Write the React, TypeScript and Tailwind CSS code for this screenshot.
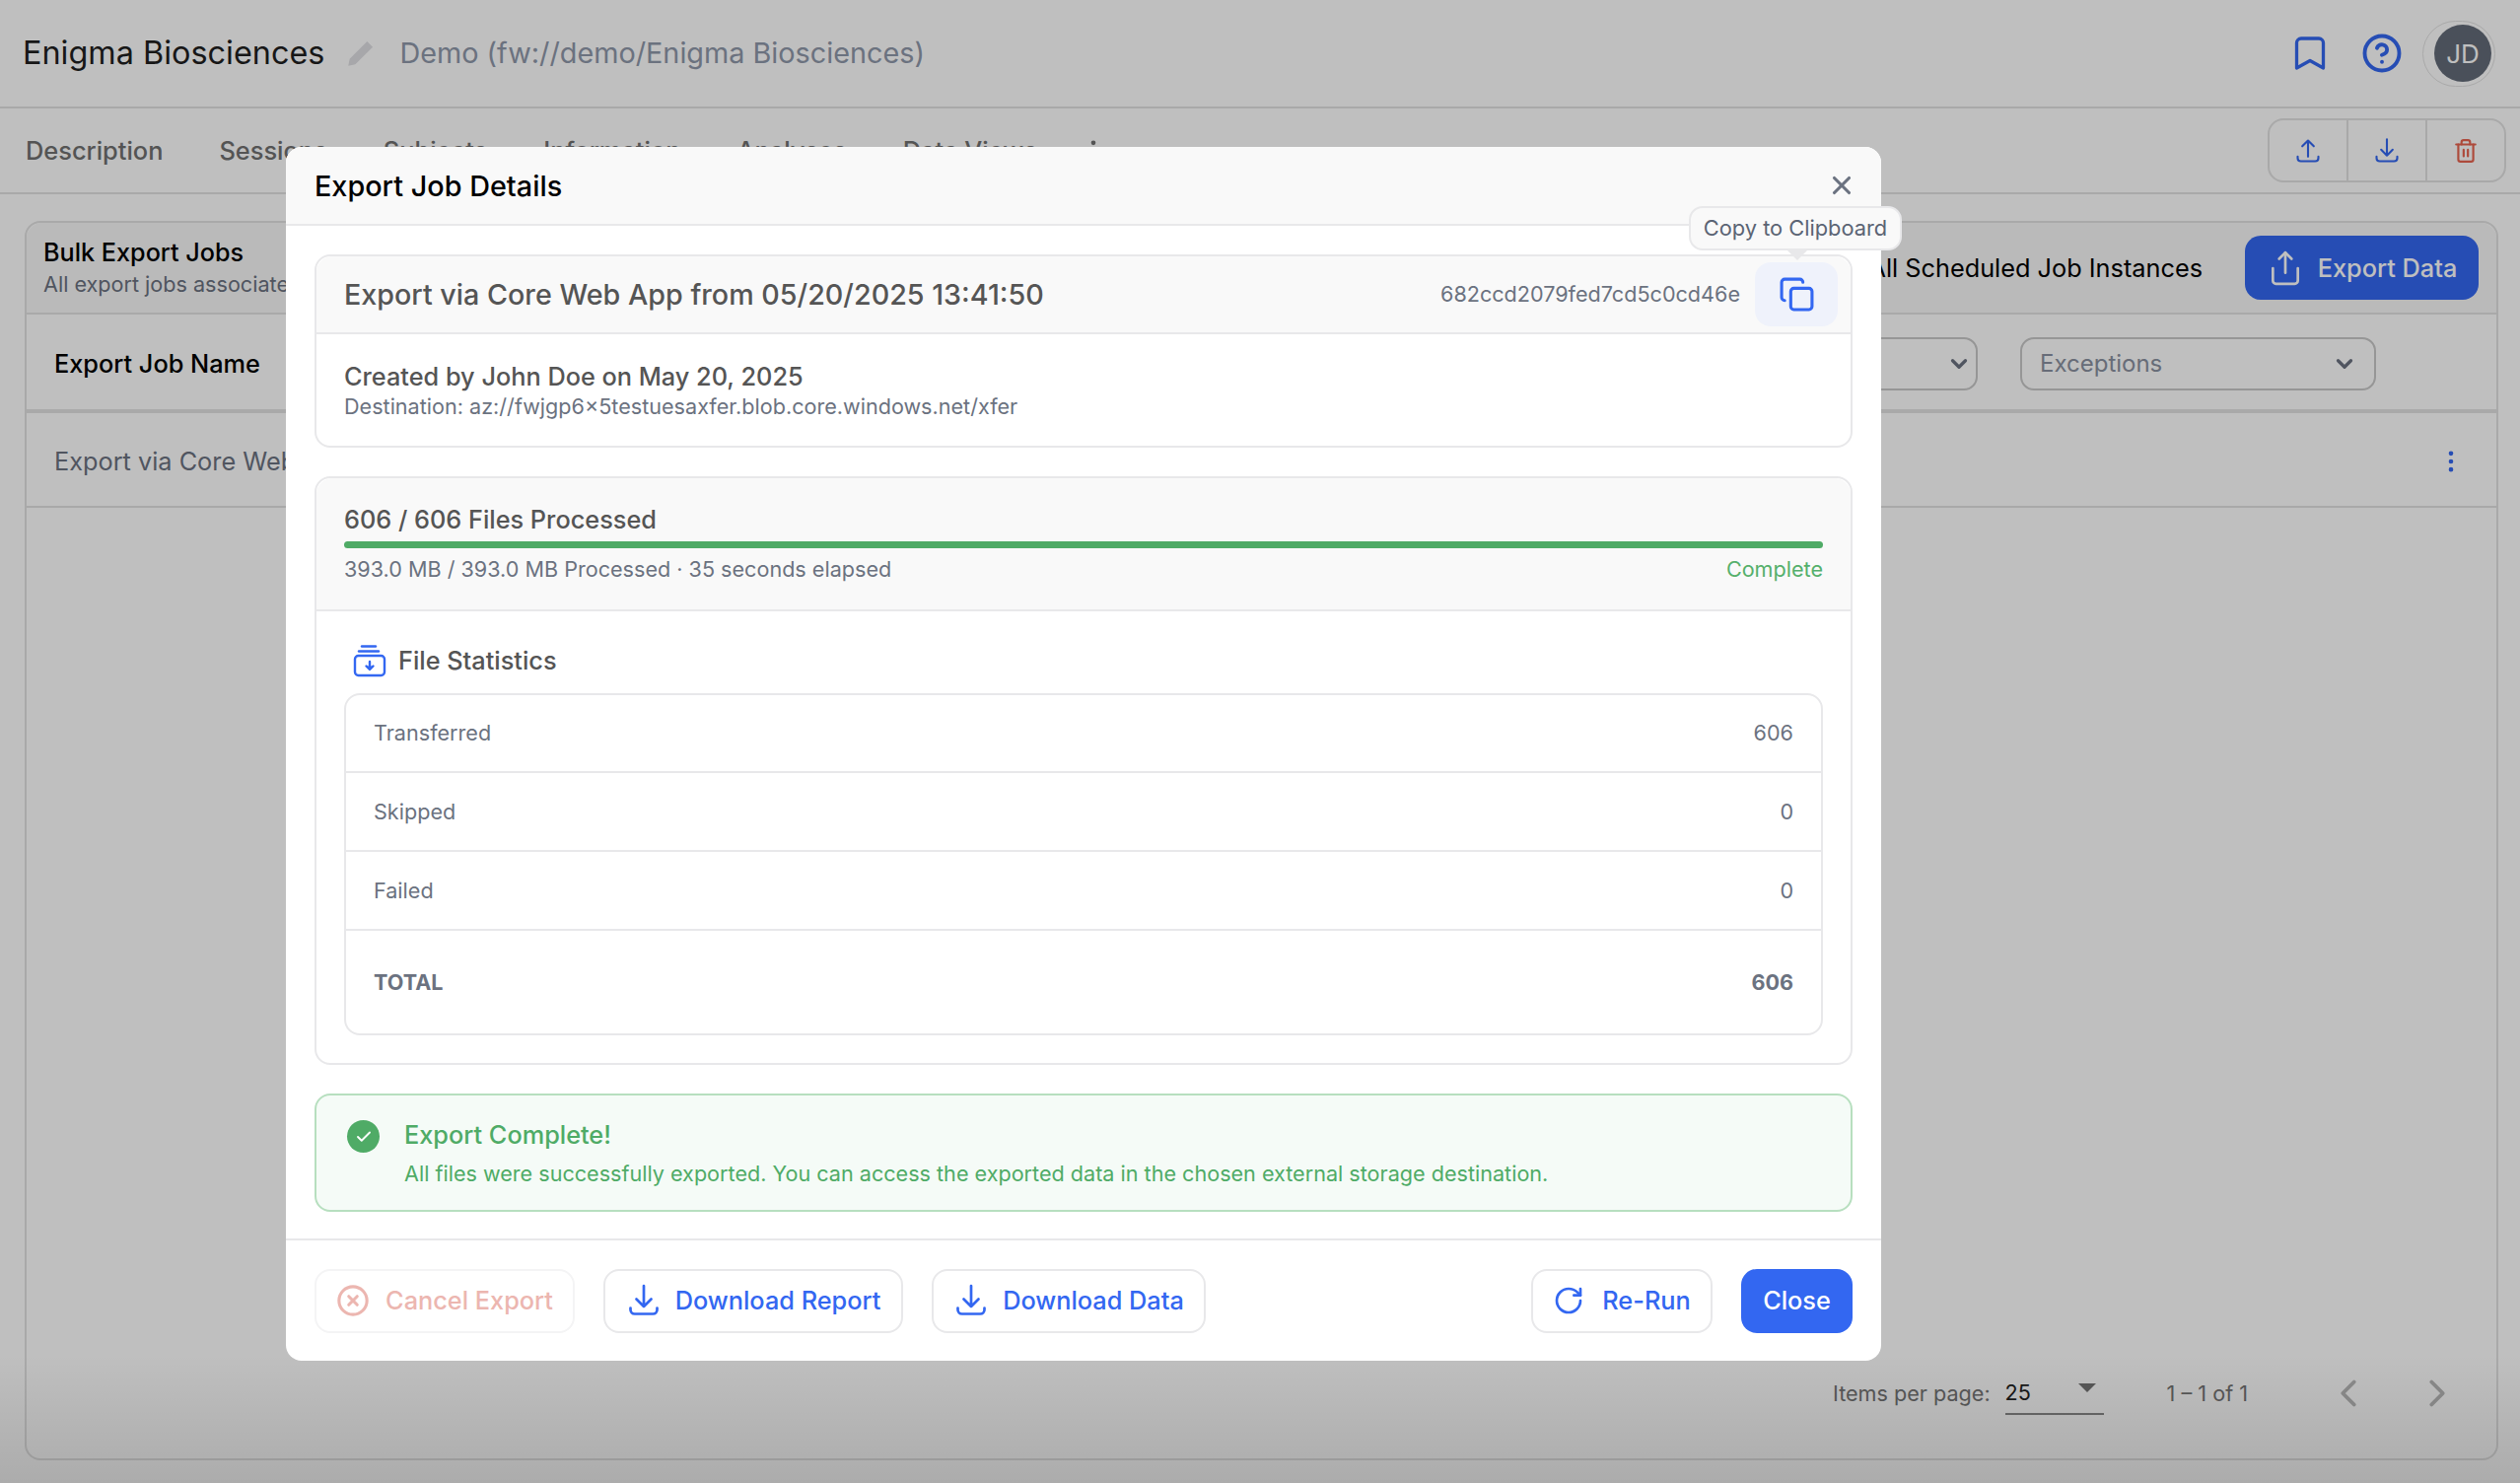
import React from 'react';
import {
  Check,
  ChevronDown,
  ChevronLeft,
  ChevronRight,
  CircleHelp,
  CircleX,
  Copy,
  EllipsisVertical,
  RotateCw,
  Share,
  Trash2,
  X,
} from 'lucide-react';

const TrayArrow: React.FC<{ className?: string; up?: boolean }> = ({ className, up }) => (
  <svg viewBox="0 0 24 24" fill="none" stroke="currentColor" strokeWidth="1.8" strokeLinecap="round" strokeLinejoin="round" className={className}>
    <path d="M3 17v1.2C3 19.8 4.2 21 5.8 21h12.4c1.6 0 2.8-1.2 2.8-2.8V17" />
    {up ? <path d="M12 17V3M7 8l5-5 5 5" /> : <path d="M12 2v14M7 11l5 5 5-5" />}
  </svg>
);

const StatsIcon: React.FC = () => (
  <svg viewBox="0 0 34 34" fill="none" className="h-[34px] w-[34px] text-[#3367f1]" stroke="currentColor" strokeLinecap="round" strokeLinejoin="round" strokeWidth="2.4">
    <path d="M9 2.5h14" />
    <path d="M6 7.5h20" />
    <rect x="2" y="12" width="30" height="20" rx="3.5" />
    <path d="M17 18v7" />
    <path d="M13.5 22.5l3.5 3.5 3.5-3.5" fill="currentColor" />
  </svg>
);

const tabs = ['Description', 'Sessions', 'Subjects', 'Information', 'Analyses', 'Data Views'];

const stats = [
  { label: 'Transferred', value: '606', height: 'h-[79px]' },
  { label: 'Skipped', value: '0', height: 'h-[80px]' },
  { label: 'Failed', value: '0', height: 'h-[80px]' },
];

const App: React.FC = () => {
  return (
    <div className="relative h-[1504px] w-[2556px] overflow-hidden bg-white font-[Inter,sans-serif]">
      {/* page behind the dialog */}
      <div className="flex h-[110px] items-center border-b-2 border-[#e2e2e2] pl-[23px] pr-[25px]">
        <span className="text-[32.4px] text-[#1f1f1f]">Enigma Biosciences</span>
        <svg viewBox="0 0 24 24" className="ml-[20px] h-[34px] w-[34px] text-[#dfdfe3]" fill="currentColor">
          <path d="M16.5 3.5l4 4L8 20l-5 1 1-5z" />
        </svg>
        <span className="ml-[22px] text-[28.8px] text-[#8f98aa]">Demo (fw://demo/Enigma Biosciences)</span>
        <div className="ml-auto flex items-center">
          <svg viewBox="0 0 24 24" fill="none" stroke="currentColor" strokeWidth="2.2" strokeLinecap="round" strokeLinejoin="round" className="h-[36px] w-[36px] text-[#3367f1]">
            <path d="M3 5a3 3 0 0 1 3-3h12a3 3 0 0 1 3 3v17l-9-5-9 5z" />
          </svg>
          <CircleHelp className="ml-[34px] h-[42px] w-[42px] text-[#3367f1]" strokeWidth={2.2} />
          <div className="ml-[20px] flex h-[67px] w-[74px] items-center justify-end rounded-full border border-[#e2e2e2] pr-[3px]">
            <div className="flex h-[58px] w-[58px] items-center justify-center rounded-full bg-[#636b78] text-[26px] text-white">JD</div>
          </div>
        </div>
      </div>

      <div className="flex h-[87px] items-center border-b-2 border-[#e2e2e2] pl-[26px] pr-[14px]">
        <div className="flex items-center gap-[57px] pt-[2px] text-[25.4px] font-medium text-[#717171]">
          {tabs.map((tab) => (
            <span key={tab}>{tab}</span>
          ))}
          <EllipsisVertical className="-ml-[14px] h-[28px] w-[28px]" />
        </div>
        <div className="ml-auto flex h-[65px] w-[242px] rounded-[16px] border-2 border-[#e2e2e2]">
          <div className="flex flex-1 items-center justify-center text-[#3367f1]">
            <TrayArrow up className="h-[28px] w-[28px]" />
          </div>
          <div className="flex flex-1 items-center justify-center border-x-2 border-[#e2e2e2] text-[#3367f1]">
            <TrayArrow className="h-[28px] w-[28px]" />
          </div>
          <div className="flex flex-1 items-center justify-center text-[#e7634f]">
            <Trash2 className="h-[26px] w-[26px]" />
          </div>
        </div>
      </div>

      <div className="ml-[25px] mt-[27px] flex h-[1257px] w-[2509px] flex-col rounded-[16px] border-2 border-[#e2e2e2]">
        <div className="flex h-[93px] items-center rounded-t-[16px] border-b-2 border-[#e2e2e2] bg-[#f9f9f9] pl-[17px] pr-[18px]">
          <div>
            <div className="text-[25.2px] font-medium leading-[32px] text-black">Bulk Export Jobs</div>
            <div className="pt-[1px] text-[21.6px] leading-[30px] text-[#6b7280]">All export jobs associated with this project</div>
          </div>
          <span className="ml-auto text-[25.3px] text-black">All Scheduled Job Instances</span>
          <button className="ml-[43px] flex h-[65px] w-[237px] items-center justify-center gap-[14px] rounded-[16px] bg-[#3367f1] text-[25.3px] font-medium text-white">
            <Share className="h-[38px] w-[38px]" strokeWidth={1.7} />
            Export Data
          </button>
        </div>
        <div className="flex h-[100px] items-center border-b-4 border-[#e2e2e2] bg-white pl-[28px] pr-[122px] pt-[4px]">
          <span className="text-[25.3px] font-medium text-black">Export Job Name</span>
          <div className="ml-auto flex h-[54px] w-[400px] items-center justify-end rounded-[14px] border-2 border-[#c8c8c8] pr-[4px]">
            <ChevronDown className="h-[26px] w-[26px] text-[#6b7280]" strokeWidth={3} />
          </div>
          <div className="ml-[43px] flex h-[54px] w-[361px] items-center justify-between rounded-[14px] border-2 border-[#c8c8c8] pl-[18px] pr-[17px]">
            <span className="text-[24px] text-[#8a91a0]">Exceptions</span>
            <ChevronDown className="h-[26px] w-[26px] text-[#6b7280]" strokeWidth={3} />
          </div>
        </div>
        <div className="flex h-[96px] items-center border-b-2 border-[#e2e2e2] pl-[28px] pr-[32px] pt-[3px]">
          <span className="text-[25.3px] text-[#6b7280]">Export via Core Web App from 05/20/2025 13:41:50</span>
          <EllipsisVertical className="ml-auto h-[28px] w-[28px] text-[#3367f1]" />
        </div>
        <div className="mt-auto mb-[43px] flex items-center justify-end pr-[37px] text-[21.6px] text-[#757575]">
          <span>Items per page:</span>
          <div className="relative ml-[15px] flex h-[44px] w-[100px] items-center border-b-2 border-[#8a8a8a] text-[#222222]">
            25
            <span className="absolute right-[8px] top-[12px] h-0 w-0 border-x-[9px] border-t-[9px] border-x-transparent border-t-[#757575]" />
          </div>
          <span className="ml-[64px]">1 – 1 of 1</span>
          <ChevronLeft className="ml-[79px] h-[46px] w-[46px] text-[#b8b8b8]" />
          <ChevronRight className="ml-[44px] h-[46px] w-[46px] text-[#b8b8b8]" />
        </div>
      </div>

      {/* backdrop */}
      <div className="absolute inset-0 bg-black/25" />
      <div className="absolute inset-x-0 bottom-0 h-[130px] bg-gradient-to-b from-transparent to-black/10" />

      {/* dialog */}
      <div className="absolute left-[290px] top-[149px] flex h-[1231px] w-[1618px] flex-col rounded-[16px] bg-white">
        <div className="flex h-[80px] items-center justify-between rounded-t-[16px] border-b-2 border-[#e8e8ea] bg-[#f9f9f9] pl-[29px] pr-[25px]">
          <span className="pt-[1px] text-[28.8px] font-medium text-black">Export Job Details</span>
          <X className="h-[30px] w-[30px] text-[#6b7280]" strokeWidth={2.5} />
        </div>

        <div className="flex flex-col gap-[29px] px-[29px] pt-[29px]">
          <div className="rounded-[16px] border-2 border-[#e8e8ea]">
            <div className="flex h-[79px] items-center rounded-t-[16px] border-b-2 border-[#e8e8ea] bg-[#f9f9f9] pl-[28px] pr-[13px]">
              <span className="text-[28.7px] font-medium text-[#555555]">Export via Core Web App from 05/20/2025 13:41:50</span>
              <span className="ml-auto text-[21.6px] text-[#6b7280]">682ccd2079fed7cd5c0cd46e</span>
              <div className="ml-[15px] flex h-[65px] w-[84px] items-center justify-center rounded-[16px] bg-[#eff2fb]">
                <Copy className="h-[37px] w-[37px] text-[#3367f1]" strokeWidth={2} />
              </div>
            </div>
            <div className="flex h-[113px] flex-col justify-center pl-[28px]">
              <div className="text-[25.3px] font-medium leading-[32px] text-[#555555]">Created by John Doe on May 20, 2025</div>
              <div className="text-[21.6px] leading-[28px] text-[#6b7280]">Destination: az://fwjgp6×5testuesaxfer.blob.core.windows.net/xfer</div>
            </div>
          </div>

          <div className="rounded-[16px] border-2 border-[#e8e8ea]">
            <div className="h-[135px] rounded-t-[16px] border-b-2 border-[#e8e8ea] bg-[#f9f9f9] px-[28px] pt-[24px]">
              <div className="text-[25.3px] font-medium leading-[36px] text-[#555555]">606 / 606 Files Processed</div>
              <div className="mt-[4px] h-[7px] rounded-full bg-[#4fab66]" />
              <div className="mt-[6px] flex justify-between text-[21.6px] leading-[30px]">
                <span className="text-[#6b7280]">393.0 MB / 393.0 MB Processed · 35 seconds elapsed</span>
                <span className="text-[#55b06c]">Complete</span>
              </div>
            </div>
            <div className="px-[28px] pb-[28px]">
              <div className="flex h-[83px] items-center gap-[12px] pl-[9px] pt-[16px]">
                <StatsIcon />
                <span className="text-[25.3px] font-medium text-[#555555]">File Statistics</span>
              </div>
              <div className="rounded-[16px] border-2 border-[#e8e8ea] text-[21.6px]">
                {stats.map((row) => (
                  <div key={row.label} className={`flex ${row.height} items-center justify-between border-b-2 border-[#e8e8ea] px-[28px] text-[#6b7280]`}>
                    <span>{row.label}</span>
                    <span>{row.value}</span>
                  </div>
                ))}
                <div className="flex h-[104px] items-center justify-between px-[28px] font-bold text-[#6b7280]">
                  <span>TOTAL</span>
                  <span>606</span>
                </div>
              </div>
            </div>
          </div>

          <div className="flex h-[120px] rounded-[16px] border-2 border-[#b7dfbf] bg-[#f5fbf7] pl-[31px] pt-[25px]">
            <div className="flex h-[33px] w-[33px] items-center justify-center rounded-full bg-[#4fab66]">
              <Check className="h-[18px] w-[18px] text-white" strokeWidth={2.5} />
            </div>
            <div className="ml-[25px] -mt-[5px] text-[#4fab66]">
              <div className="text-[25.3px] font-medium leading-[40px]">Export Complete!</div>
              <div className="text-[21.6px] leading-[38px]">All files were successfully exported. You can access the exported data in the chosen external storage destination.</div>
            </div>
          </div>
        </div>

        <div className="mt-auto flex h-[124px] items-center border-t-2 border-[#e8e8ea] px-[29px] text-[25.3px] font-medium">
          <button className="flex h-[65px] w-[264px] items-center justify-center gap-[16px] rounded-[16px] border-2 border-[#f4f4f5] text-[#ecb6b0]">
            <CircleX className="h-[34px] w-[34px]" strokeWidth={2.2} />
            Cancel Export
          </button>
          <button className="ml-[29px] flex h-[65px] w-[304px] items-center justify-center gap-[14px] rounded-[16px] border-2 border-[#e8e8ea] text-[#3367f1]">
            <TrayArrow className="h-[36px] w-[36px]" />
            Download Report
          </button>
          <button className="ml-[29px] flex h-[65px] w-[278px] items-center justify-center gap-[14px] rounded-[16px] border-2 border-[#e8e8ea] text-[#3367f1]">
            <TrayArrow className="h-[36px] w-[36px]" />
            Download Data
          </button>
          <button className="ml-auto flex h-[65px] w-[184px] items-center justify-center gap-[18px] rounded-[16px] border-2 border-[#e8e8ea] text-[#3367f1]">
            <RotateCw className="h-[32px] w-[32px]" />
            Re-Run
          </button>
          <button className="ml-[29px] h-[65px] w-[113px] rounded-[16px] bg-[#3367f1] text-white">Close</button>
        </div>

        {/* tooltip over the copy button */}
        <div className="absolute left-[1423px] top-[60px] flex h-[45px] w-[216px] items-center justify-center rounded-[14px] border-2 border-[#e8e8ea] bg-[#f9f9f9] text-[21.8px] text-[#5b6474]">
          Copy to Clipboard
          <span className="absolute left-[98px] top-[43px] h-0 w-0 border-x-[10px] border-t-[10px] border-x-transparent border-t-[#e8e8ea]" />
        </div>
      </div>
    </div>
  );
};

export default App;
